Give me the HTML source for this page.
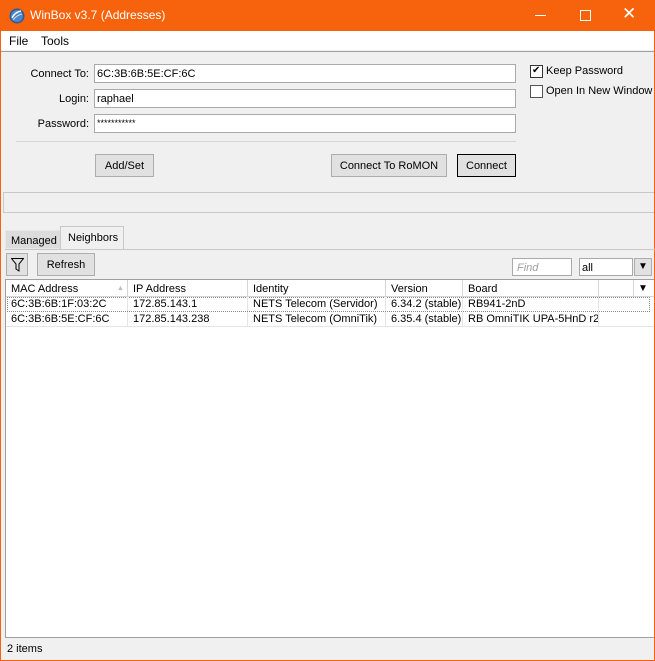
<!DOCTYPE html><html><head><style>
*{margin:0;padding:0;box-sizing:border-box}
body{width:655px;height:661px;background:#f0f0f0;font-family:"Liberation Sans",sans-serif;font-size:11px;color:#000;position:relative;overflow:hidden;border:1px solid #f7630c;border-top:0;white-space:nowrap}
.a{position:absolute}
.inp{position:absolute;background:#fff;border:1px solid #a9a9a9;height:19px;padding:2px 2px 0;font-size:11px;line-height:15px}
.btn{position:absolute;background:#e1e1e1;border:1px solid #adadad;text-align:center;line-height:23px;height:23px}
.lbl{position:absolute;text-align:right;width:88px;left:0}
.cb{position:absolute;width:13px;height:13px;background:#fff;border:1px solid #333}
.th{position:absolute;top:0;height:17px;border-right:1px solid #d5d5d5;padding-left:5px;line-height:18px;overflow:hidden}
.td{position:absolute;padding-left:5px;border-right:1px solid #e5e5e5;height:14px;line-height:15px;overflow:hidden}
</style></head><body>
<div class="a" style="left:-1px;top:0;width:655px;height:31px;background:#f7630c;color:#fff">
 <svg class="a" style="left:9px;top:8px" width="16" height="16"><circle cx="8" cy="8" r="7.5" fill="#2a5a9a"/><circle cx="8" cy="8" r="6" fill="#4d86c8"/><path d="M3 10 Q6 4 12 3" stroke="#fff" stroke-width="1.5" fill="none"/><path d="M4 12 Q8 7 13 6" stroke="#cde" stroke-width="1" fill="none"/></svg>
 <div class="a" style="left:30px;top:8px;font-size:12px">WinBox v3.7 (Addresses)</div>
 <div class="a" style="left:535px;top:15px;width:11px;height:1px;background:#fff"></div>
 <div class="a" style="left:580px;top:10px;width:11px;height:11px;border:1px solid #fff"></div>
 <div class="a" style="left:622px;top:4px;font-size:17px">✕</div>
</div>
<div class="a" style="left:0;top:31px;width:653px;height:19px;background:#fff;font-size:12px">
 <span class="a" style="left:8px;top:3px">File</span><span class="a" style="left:40px;top:3px">Tools</span>
</div>
<div class="a" style="left:0;top:51px;width:653px;height:1px;background:#a0a0a0"></div>
<div class="lbl" style="top:68px">Connect To:</div>
<div class="lbl" style="top:93px">Login:</div>
<div class="lbl" style="top:118px">Password:</div>
<div class="inp" style="left:93px;top:64px;width:422px">6C:3B:6B:5E:CF:6C</div>
<div class="inp" style="left:93px;top:89px;width:422px">raphael</div>
<div class="inp" style="left:93px;top:114px;width:422px;font-size:9px;line-height:12px">***********</div>
<div class="cb" style="left:529px;top:65px"><span class="a" style="left:1px;top:-1px;font-size:10px">✔</span></div>
<div class="a" style="left:545px;top:65px">Keep Password</div>
<div class="cb" style="left:529px;top:85px;border-color:#555"></div>
<div class="a" style="left:545px;top:85px">Open In New Window</div>
<div class="a" style="left:15px;top:141px;width:500px;height:1px;background:#d5d5d5"></div>
<div class="btn" style="left:94px;top:154px;width:59px">Add/Set</div>
<div class="btn" style="left:330px;top:154px;width:116px">Connect To RoMON</div>
<div class="btn" style="left:456px;top:154px;width:59px;border:1px solid #000">Connect</div>
<div class="a" style="left:2px;top:192px;width:651px;height:21px;border:1px solid #c8c8c8;border-right:0"></div>
<div class="a" style="left:4px;top:230px;width:56px;height:19px;background:#dcdcdc;border:1px solid #e8e8e8;padding:4px 0 0 5px">Managed</div>
<div class="a" style="left:59px;top:226px;width:64px;height:24px;background:#f0f0f0;border:1px solid #c8c8c8;border-bottom:0;padding:5px 0 0 7px">Neighbors</div>
<div class="a" style="left:4px;top:249px;width:650px;height:1px;background:#c8c8c8"></div>
<div class="btn" style="left:5px;top:253px;width:22px;height:23px"><svg class="a" style="left:4px;top:4px" width="13" height="14"><path d="M0.5 0.5H12.5L8 6V13L5 11V6Z" fill="none" stroke="#000"/></svg></div>
<div class="btn" style="left:36px;top:253px;width:58px">Refresh</div>
<div class="inp" style="left:511px;top:258px;width:60px;height:18px;color:#a0a0a0;font-style:italic;line-height:14px;padding-left:4px">Find</div>
<div class="inp" style="left:578px;top:258px;width:54px;height:18px;line-height:14px">all</div>
<div class="btn" style="left:633px;top:258px;width:18px;height:18px;line-height:16px;font-size:10px">▼</div>
<div class="a" style="left:4px;top:279px;width:649px;height:359px;background:#fff;border:1px solid #a0a0a0;border-right:0">
 <div class="a" style="left:0;top:0;width:648px;height:17px;background:#fff;border-bottom:1px solid #d5d5d5">
  <div class="th" style="left:0;width:122px">MAC Address<span class="a" style="left:111px;top:0;color:#bbb;font-size:7px">▲</span></div>
  <div class="th" style="left:122px;width:120px">IP Address</div>
  <div class="th" style="left:242px;width:138px">Identity</div>
  <div class="th" style="left:380px;width:77px">Version</div>
  <div class="th" style="left:457px;width:136px">Board</div>
  <div class="th" style="left:593px;width:35px"></div>
  <div class="a" style="left:632px;top:3px;font-size:10px">▼</div>
 </div>
 <div class="a" style="left:1px;top:17px;width:643px;height:15px;border:1px dotted #888"></div>
 <div class="td" style="left:0;top:17px;width:122px">6C:3B:6B:1F:03:2C</div>
 <div class="td" style="left:122px;top:17px;width:120px">172.85.143.1</div>
 <div class="td" style="left:242px;top:17px;width:138px">NETS Telecom (Servidor)</div>
 <div class="td" style="left:380px;top:17px;width:77px">6.34.2 (stable)</div>
 <div class="td" style="left:457px;top:17px;width:136px">RB941-2nD</div>
 <div class="td" style="left:0;top:32px;width:122px">6C:3B:6B:5E:CF:6C</div>
 <div class="td" style="left:122px;top:32px;width:120px">172.85.143.238</div>
 <div class="td" style="left:242px;top:32px;width:138px">NETS Telecom (OmniTik)</div>
 <div class="td" style="left:380px;top:32px;width:77px">6.35.4 (stable)</div>
 <div class="td" style="left:457px;top:32px;width:136px">RB OmniTIK UPA-5HnD r2</div>
 <div class="a" style="left:0;top:46px;width:648px;height:1px;background:#e5e5e5"></div>
</div>
<div class="a" style="left:6px;top:643px">2 items</div>
</body></html>
